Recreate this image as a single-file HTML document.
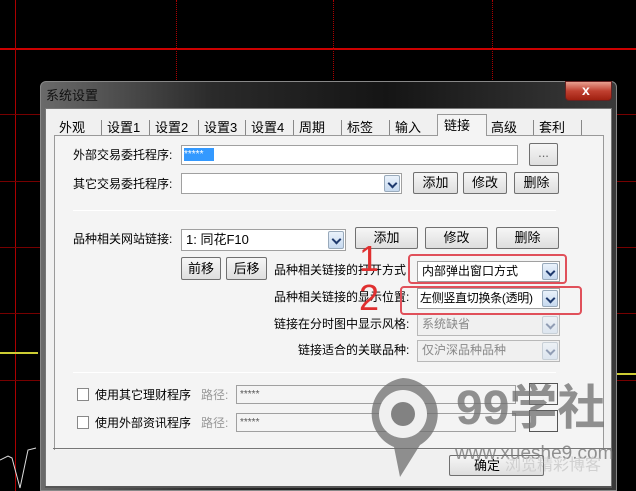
<!DOCTYPE html>
<html><head><meta charset="utf-8">
<style>
*{margin:0;padding:0;box-sizing:border-box}
body{width:636px;height:491px;background:#000;position:relative;overflow:hidden;font-family:"Liberation Sans","Noto Sans CJK SC",sans-serif;font-size:12px;color:#000}
.a{position:absolute}
.t{position:absolute;white-space:nowrap;line-height:14px}
.l{font-size:12px}
.btn{position:absolute;border:1px solid #707070;border-radius:2px;background:linear-gradient(#f6f6f6,#dedede);text-align:center;font-size:13px}
.inp{position:absolute;border:1px solid #a0a0a0;background:#fff}
.cb{position:absolute;border:1px solid #a0a0a0;background:#fff;font-size:12px;padding-left:4px;line-height:19px;white-space:nowrap;overflow:hidden}
.cb i{position:absolute;right:1px;top:1px;bottom:1px;width:16px;border:1px solid #9ab;border-radius:2px;background:linear-gradient(#eaf2fb,#c6d9ef)}
.cb i:after{content:"";position:absolute;left:4px;top:4px;width:5px;height:5px;border-right:2px solid #1f3a6d;border-bottom:2px solid #1f3a6d;transform:rotate(45deg)}
.dis{background:#f0f0f0;color:#888;border-color:#b8b8b8}
.dis i{opacity:.45}
</style></head><body>
<div class="a" style="left:0;top:48px;width:636px;height:2px;background:#c00"></div>
<div class="a" style="left:15px;top:0;width:1px;height:491px;background:#a00"></div>
<div class="a" style="left:176px;top:0;width:0;height:82px;border-left:1px dotted #a00"></div>
<div class="a" style="left:333px;top:0;width:0;height:82px;border-left:1px dotted #a00"></div>
<div class="a" style="left:492px;top:0;width:0;height:82px;border-left:1px dotted #a00"></div>
<div class="a" style="left:0;top:114px;width:636px;height:1px;background:#700"></div>
<div class="a" style="left:0;top:181px;width:636px;height:1px;background:#700"></div>
<div class="a" style="left:0;top:247px;width:636px;height:1px;background:#700"></div>
<div class="a" style="left:0;top:313px;width:636px;height:1px;background:#700"></div>
<div class="a" style="left:0;top:380px;width:636px;height:1px;background:#700"></div>
<div class="a" style="left:0;top:352px;width:38px;height:2px;background:#cc3"></div>
<div class="a" style="left:617px;top:373px;width:19px;height:2px;background:#cc3"></div>
<svg class="a" style="left:0;top:440px" width="40" height="51"><path d="M0 20 L8 16 L12 18 L20 48 L28 10 L36 8" stroke="#ddd" fill="none"/></svg>

<div class="a" style="left:40px;top:81px;width:577px;height:410px;border-radius:6px 6px 0 0;background:linear-gradient(90deg,#6a6a6a,#2a2a2a 30%,#151515 60%,#3a3a3a);border:1px solid #888"></div>
<div class="t" style="left:46px;top:89px;font-size:13px;color:#111">系统设置</div>
<div class="a" style="left:565px;top:81px;width:47px;height:20px;border:1px solid #622;border-radius:0 0 4px 4px;background:linear-gradient(#e8a090,#c04030 50%,#a02010)"></div>
<div class="t" style="left:582px;top:83px;color:#fff;font-weight:bold;font-size:14px">x</div>
<div class="a" style="left:45px;top:108px;width:567px;height:380px;background:#f0f0f0;border:1px solid #777"></div>

<div class="a" style="left:54px;top:135px;width:550px;height:315px;border:1px solid #999;border-bottom:none;background:#f4f4f4"></div>
<div class="a" style="left:54px;top:117px;width:527px;height:18px;background:#f0f0f0"></div>
<div class="a" style="left:437px;top:114px;width:50px;height:22px;background:#f4f4f4;border:1px solid #999;border-bottom:none"></div>
<div class="t" style="left:59px;top:121px;font-size:13px">外观</div>
<div class="t" style="left:107px;top:121px;font-size:13px">设置1</div>
<div class="t" style="left:155px;top:121px;font-size:13px">设置2</div>
<div class="t" style="left:204px;top:121px;font-size:13px">设置3</div>
<div class="t" style="left:251px;top:121px;font-size:13px">设置4</div>
<div class="t" style="left:299px;top:121px;font-size:13px">周期</div>
<div class="t" style="left:347px;top:121px;font-size:13px">标签</div>
<div class="t" style="left:395px;top:121px;font-size:13px">输入</div>
<div class="t" style="left:444px;top:119px;font-size:13px">链接</div>
<div class="t" style="left:491px;top:121px;font-size:13px">高级</div>
<div class="t" style="left:539px;top:121px;font-size:13px">套利</div>
<div class="a" style="left:101px;top:120px;width:1px;height:15px;background:#888"></div>
<div class="a" style="left:149px;top:120px;width:1px;height:15px;background:#888"></div>
<div class="a" style="left:198px;top:120px;width:1px;height:15px;background:#888"></div>
<div class="a" style="left:245px;top:120px;width:1px;height:15px;background:#888"></div>
<div class="a" style="left:293px;top:120px;width:1px;height:15px;background:#888"></div>
<div class="a" style="left:341px;top:120px;width:1px;height:15px;background:#888"></div>
<div class="a" style="left:389px;top:120px;width:1px;height:15px;background:#888"></div>
<div class="a" style="left:533px;top:120px;width:1px;height:15px;background:#888"></div>
<div class="a" style="left:581px;top:120px;width:1px;height:15px;background:#888"></div>

<div class="t l" style="left:73px;top:148px">外部交易委托程序:</div>
<div class="inp" style="left:181px;top:145px;width:337px;height:20px"></div>
<div class="a" style="left:184px;top:148px;width:30px;height:13px;background:#3399ff;color:#fff;font-size:10px;line-height:13px">*****</div>
<div class="btn" style="left:529px;top:143px;width:29px;height:23px;line-height:18px;color:#666">...</div>
<div class="t l" style="left:73px;top:177px">其它交易委托程序:</div>
<div class="cb" style="left:181px;top:173px;width:221px;height:21px"><i></i></div>
<div class="btn" style="left:413px;top:172px;width:45px;height:22px;line-height:20px">添加</div>
<div class="btn" style="left:463px;top:172px;width:44px;height:22px;line-height:20px">修改</div>
<div class="btn" style="left:514px;top:172px;width:45px;height:22px;line-height:20px">删除</div>
<div class="a" style="left:73px;top:210px;width:483px;height:1px;background:#aaa;border-bottom:1px solid #fff"></div>

<div class="t l" style="left:73px;top:232px">品种相关网站链接:</div>
<div class="cb" style="left:181px;top:229px;width:165px;height:22px;line-height:20px;font-size:13px">1: 同花F10<i></i></div>
<div class="btn" style="left:355px;top:227px;width:63px;height:22px;line-height:20px">添加</div>
<div class="btn" style="left:425px;top:227px;width:63px;height:22px;line-height:20px">修改</div>
<div class="btn" style="left:496px;top:227px;width:63px;height:22px;line-height:20px">删除</div>
<div class="btn" style="left:181px;top:257px;width:40px;height:23px;line-height:21px">前移</div>
<div class="btn" style="left:226px;top:257px;width:41px;height:23px;line-height:21px">后移</div>

<div class="t l" style="left:274px;top:263px">品种相关链接的打开方式</div>
<div class="cb" style="left:417px;top:261px;width:143px;height:21px">内部弹出窗口方式<i></i></div>
<div class="t l" style="left:274px;top:290px">品种相关链接的显示位置:</div>
<div class="cb" style="left:417px;top:288px;width:143px;height:21px;padding-left:2px;letter-spacing:-0.3px">左侧竖直切换条(透明)<i></i></div>
<div class="t l" style="left:274px;top:317px">链接在分时图中显示风格:</div>
<div class="cb dis" style="left:417px;top:314px;width:143px;height:22px">系统缺省<i></i></div>
<div class="t l" style="left:298px;top:343px">链接适合的关联品种:</div>
<div class="cb dis" style="left:417px;top:340px;width:143px;height:22px">仅沪深品种品种<i></i></div>

<div class="a" style="left:408px;top:254px;width:159px;height:30px;border:2px solid #e0505a;border-radius:4px"></div>
<div class="a" style="left:400px;top:286px;width:182px;height:29px;border:2px solid #e0505a;border-radius:4px"></div>
<div class="t" style="left:359px;top:240px;font-size:36px;line-height:38px;color:#e03030">1</div>
<div class="t" style="left:359px;top:279px;font-size:36px;line-height:38px;color:#e03030">2</div>

<div class="a" style="left:73px;top:372px;width:483px;height:1px;background:#aaa;border-bottom:1px solid #fff"></div>

<div class="a" style="left:77px;top:388px;width:12px;height:13px;border:1px solid #888;background:#fff"></div>
<div class="t l" style="left:95px;top:388px">使用其它理财程序</div>
<div class="t l" style="left:201px;top:388px;color:#999">路径:</div>
<div class="inp" style="left:236px;top:385px;width:280px;height:19px;background:#f4f4f4;font-size:10px;color:#555;padding-left:3px;line-height:17px">*****</div>
<div class="a" style="left:77px;top:416px;width:12px;height:13px;border:1px solid #888;background:#fff"></div>
<div class="t l" style="left:95px;top:416px">使用外部资讯程序</div>
<div class="t l" style="left:201px;top:416px;color:#999">路径:</div>
<div class="inp" style="left:236px;top:413px;width:280px;height:19px;background:#f4f4f4;font-size:10px;color:#555;padding-left:3px;line-height:17px">*****</div>
<div class="a" style="left:529px;top:383px;width:29px;height:22px;border:1px solid #555"></div>
<div class="a" style="left:529px;top:410px;width:29px;height:22px;border:1px solid #555"></div>

<div class="a" style="left:53px;top:448px;width:559px;height:1px;background:#777"></div>
<div class="btn" style="left:449px;top:455px;width:95px;height:21px;line-height:19px;text-align:left;padding-left:24px">确定</div>
<div class="a" style="left:45px;top:486px;width:567px;height:2px;background:#555"></div>

<svg class="a" style="left:360px;top:375px" width="90" height="110">
<path d="M43 3 A36 36 0 0 1 60 70 L40 102 L34 72 A36 36 0 0 1 43 3Z" fill="rgba(110,110,110,.75)"/>
<circle cx="43" cy="39" r="24" fill="#f0f0f0"/>
<circle cx="43" cy="39" r="12" fill="rgba(110,110,110,.85)"/>
</svg>
<div class="t" style="left:456px;top:383px;font-size:48px;line-height:52px;font-weight:bold;color:rgba(110,110,110,.75)">99学社</div>
<div class="t" style="left:455px;top:444px;font-size:19px;line-height:20px;color:rgba(120,120,120,.8)">www.xueshe9.com</div>
<div class="t" style="left:505px;top:457px;font-size:16px;line-height:18px;color:rgba(200,200,200,.8)">浏览精彩博客</div>
</body></html>
